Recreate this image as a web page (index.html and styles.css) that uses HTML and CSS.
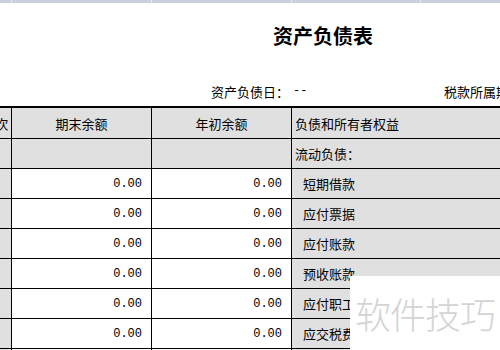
FILE: index.html
```html
<!DOCTYPE html>
<html lang="zh">
<head>
<meta charset="utf-8">
<link rel="stylesheet" href="styles.css">
</head>
<body>
<div class="page">
  <div class="topbar">
    <span class="tb c0"></span><span class="tb c1"></span><span class="tb c2"></span><span class="tb c3"></span><span class="tb c4"></span>
  </div>
  <div class="title">资产负债表</div>
  <div class="meta">
    <span class="meta-label">资产负债日：</span>
    <span class="meta-value">--</span>
    <span class="meta-tax">税款所属期</span>
  </div>
  <table class="sheet">
    <colgroup>
      <col class="w0"><col class="w1"><col class="w2"><col class="w3">
    </colgroup>
    <tr class="head">
      <td class="g center">行次</td>
      <td class="g center">期末余额</td>
      <td class="g center">年初余额</td>
      <td class="g label">负债和所有者权益</td>
    </tr>
    <tr>
      <td class="g"></td>
      <td class="g"></td>
      <td class="g"></td>
      <td class="g label">流动负债：</td>
    </tr>
    <tr>
      <td class="g"></td><td class="num">0.00</td><td class="num">0.00</td><td class="g item">短期借款</td>
    </tr>
    <tr>
      <td class="g"></td><td class="num">0.00</td><td class="num">0.00</td><td class="g item">应付票据</td>
    </tr>
    <tr>
      <td class="g"></td><td class="num">0.00</td><td class="num">0.00</td><td class="g item">应付账款</td>
    </tr>
    <tr>
      <td class="g"></td><td class="num">0.00</td><td class="num">0.00</td><td class="g item">预收账款</td>
    </tr>
    <tr>
      <td class="g"></td><td class="num">0.00</td><td class="num">0.00</td><td class="g item">应付职工薪酬</td>
    </tr>
    <tr>
      <td class="g"></td><td class="num">0.00</td><td class="num">0.00</td><td class="g item">应交税费</td>
    </tr>
    <tr>
      <td class="g"></td><td class="num">0.00</td><td class="num">0.00</td><td class="g item">应付利息</td>
    </tr>
  </table>
  <div class="watermark">软件技巧</div>
</div>
</body>
</html>
```
FILE: styles.css
```css
html, body {
  margin: 0;
  padding: 0;
  background: #fff;
}
body {
  width: 500px;
  height: 350px;
  overflow: hidden;
  font-family: "Noto Sans CJK SC", "Noto Sans", sans-serif;
  color: #000;
}
.page {
  position: relative;
  width: 500px;
  height: 350px;
  overflow: hidden;
}
.topbar {
  display: flex;
  height: 3px;
  background: #c9d0de;
}
.tb {
  display: block;
  height: 3px;
  border-right: 1px solid #e4e8f0;
  box-sizing: border-box;
}
.tb.c0 { width: 12px; }
.tb.c1 { width: 140px; }
.tb.c2 { width: 140px; }
.tb.c3 { width: 129px; }
.tb.c4 { flex: 1; border-right: none; }
.title {
  margin-top: 23px;
  padding-left: 273px;
  font-size: 20px;
  line-height: 20px;
  font-weight: bold;
  letter-spacing: 0;
}
.meta {
  display: flex;
  margin-top: 39px;
  font-size: 13px;
  line-height: 13px;
  height: 13px;
  white-space: nowrap;
}
.meta-label {
  width: 289px;
  text-align: right;
  flex: none;
}
.meta-value {
  width: 151px;
  padding-left: 4px;
  flex: none;
  font-family: "Liberation Mono", monospace;
  font-size: 12px;
}
.meta-tax {
  flex: none;
}
.sheet {
  margin-top: 8px;
  margin-left: -21px;
  border-collapse: collapse;
  table-layout: fixed;
  width: 613px;
  font-size: 13px;
}
.w0 { width: 32px; }
.w1 { width: 140px; }
.w2 { width: 140px; }
.w3 { width: 301px; }
.sheet td {
  border: 1px solid #000;
  height: 29px;
  padding: 0;
  white-space: nowrap;
  overflow: hidden;
  vertical-align: middle;
  line-height: 16px;
}
.sheet tr.head td {
  border-top: 2px solid #000;
  height: 28px;
  padding-top: 2px;
}
.g { background: #e0e0e0; }
.center { text-align: center; }
.label { padding-left: 3px !important; }
.item { padding-left: 11px !important; }
.num {
  text-align: right;
  padding-right: 9px !important;
  font-family: "Liberation Mono", monospace;
  font-size: 12px;
  background: #fff;
}
.watermark {
  position: absolute;
  left: 350px;
  top: 276px;
  width: 150px;
  height: 74px;
  background: #fff;
  color: #d4d4d4;
  font-size: 36px;
  font-weight: 300;
  line-height: 74px;
  padding-left: 5px;
  box-sizing: border-box;
  letter-spacing: -1px;
  white-space: nowrap;
}
```
